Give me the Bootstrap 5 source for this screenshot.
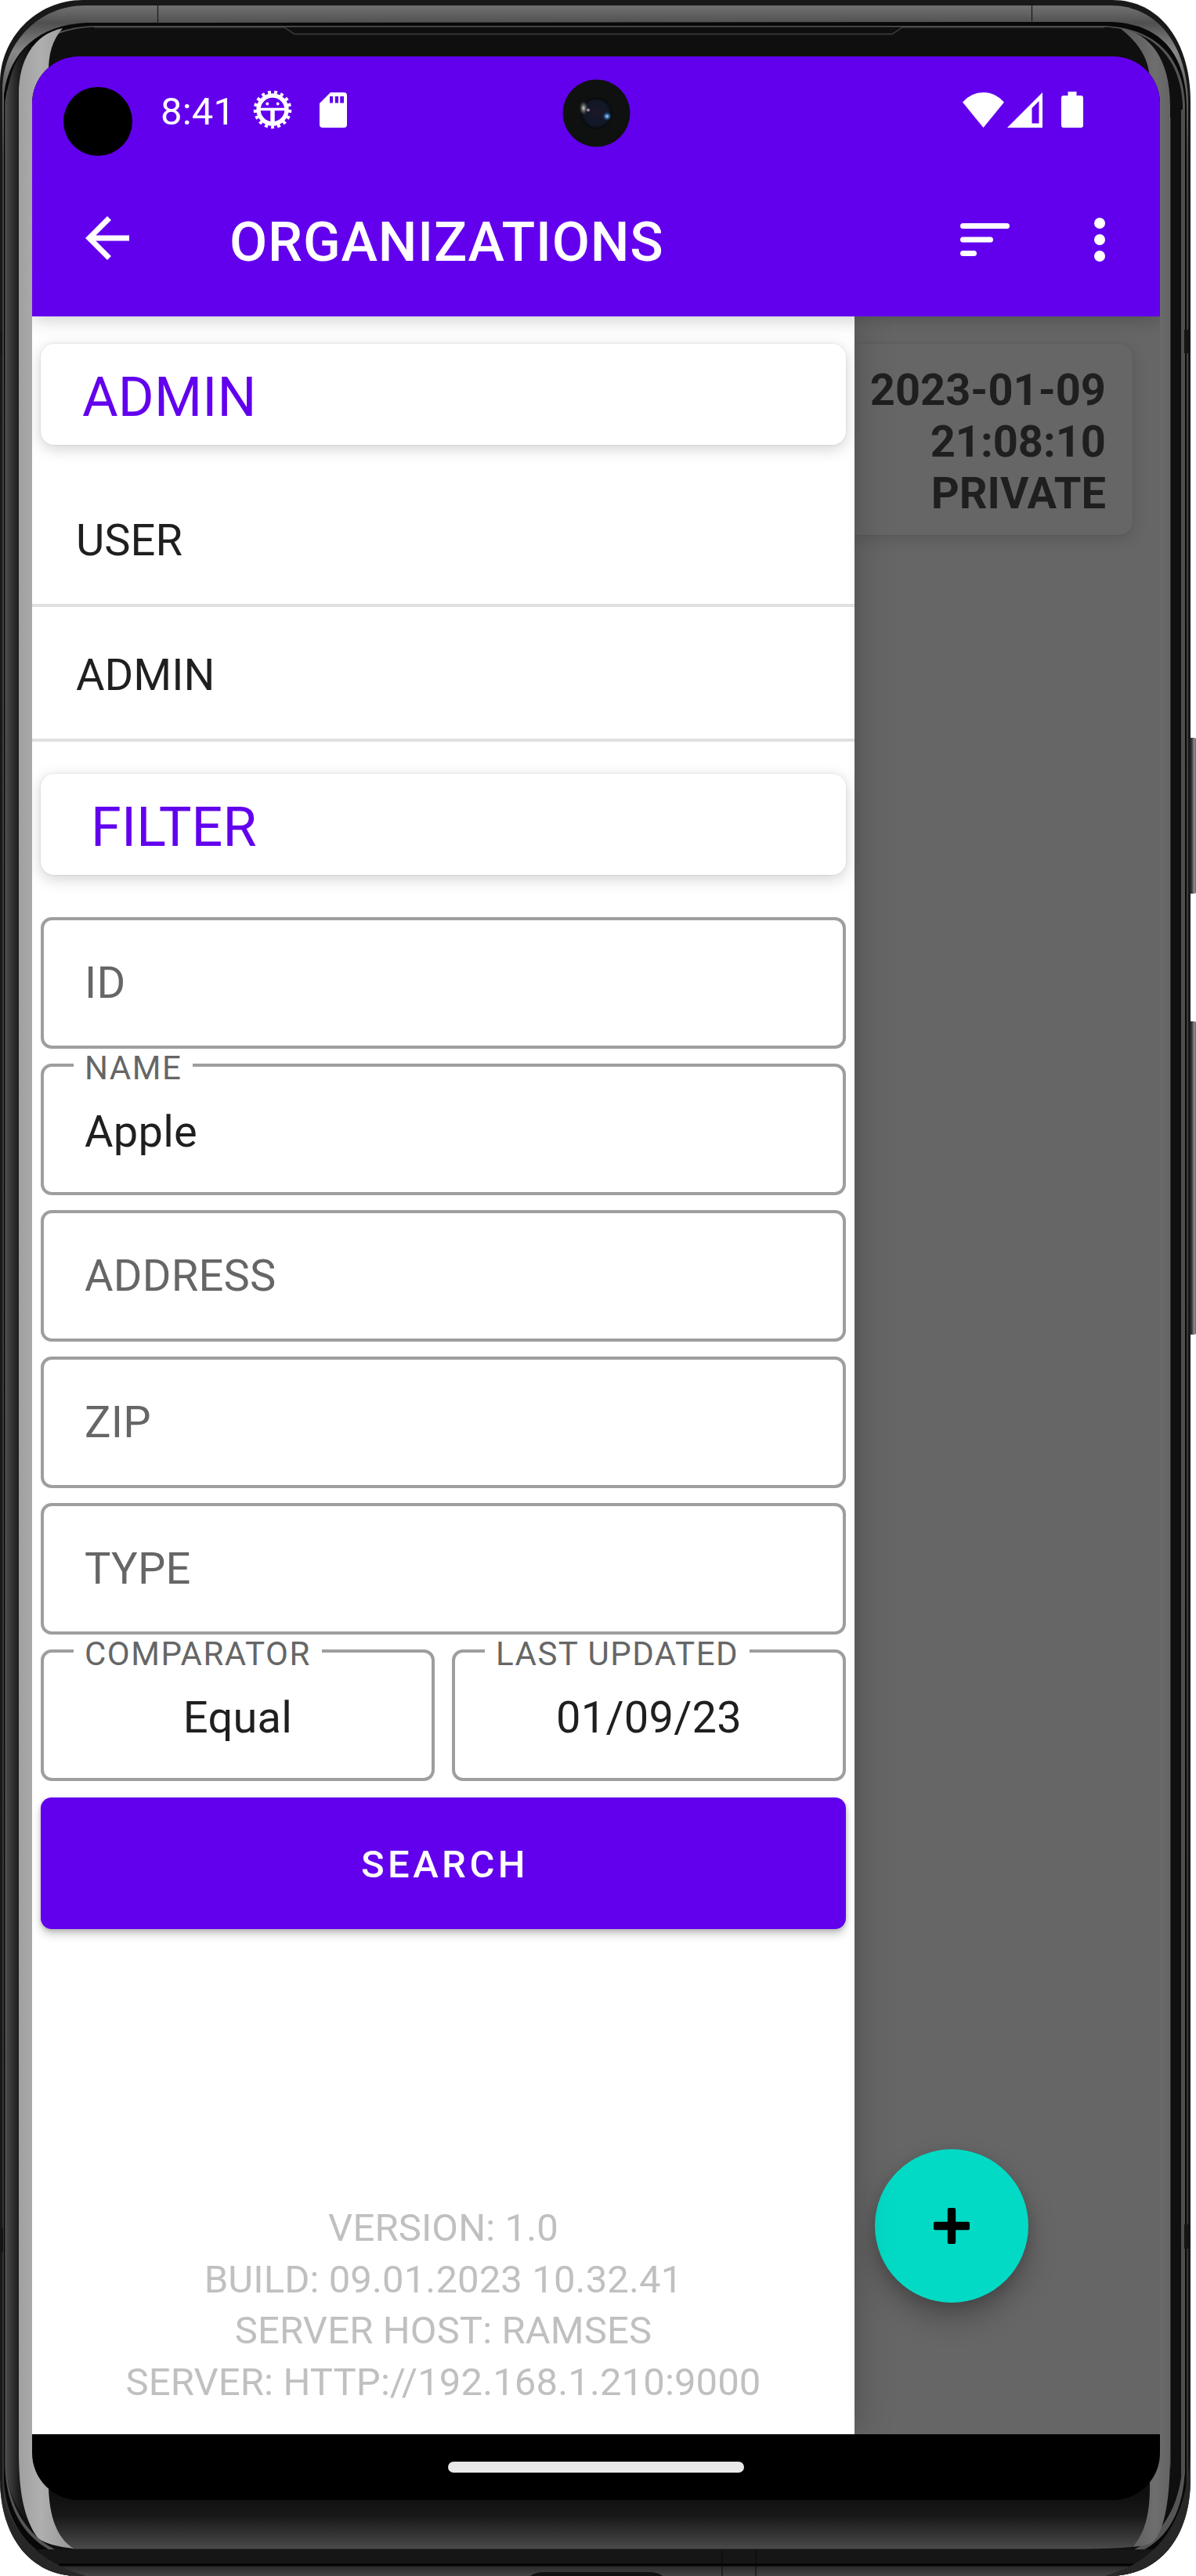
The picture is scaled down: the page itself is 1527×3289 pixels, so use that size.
<!DOCTYPE html>
<html lang="en">
<head>
<meta charset="utf-8">
<meta name="viewport" content="width=device-width, initial-scale=1">
<title>Organizations</title>
<link href="https://cdn.jsdelivr.net/npm/bootstrap@5.3.0/dist/css/bootstrap.min.css" rel="stylesheet">
<style>
  :root { --brand: #6200ee; --ink: #1f1f1f; --hint: #666; }
  body { width: 1527px; background: #fff; font-family: Roboto, "Liberation Sans", sans-serif; color: var(--ink); }
  .device { width: 1527px; height: 3289px; padding: 72px 46px 97px 41px; overflow: hidden; }
  .bezel { left: 0; top: 0; width: 1527px; height: 3289px; }
  .screen { width: 1440px; height: 3120px; border-radius: 60px; background: #000; overflow: hidden; }
  .appbar { background: var(--brand); color: #fff; height: 332px; z-index: 3; box-shadow: 0 4px 22px rgba(0,0,0,.2); }
  .statusbar { height: 136px; padding: 0 98px 0 164px; }
  .clock { font-size: 49px; line-height: 58px; padding-top: 5px; width: 96px; letter-spacing: .2px; }
  .bug-icon { margin-left: 22px; }
  .sd-icon { margin-left: 35px; }
  .toolbar { height: 196px; padding: 0 70px 0 54px; }
  .toolbar h1 { font-size: 70px; font-weight: 500; line-height: 82px; padding-top: 6px; margin-left: 114px; letter-spacing: .85px; }
  .more-icon { margin-left: 108px; }
  .punch { width: 88px; height: 88px; left: 40px; top: 39px; background: #000; }
  .lens { left: 677px; top: 29px; }
  .drawer { width: 1050px; background: #fff; z-index: 2; box-shadow: 0 0 46px rgba(0,0,0,.24); padding-top: 35px; }
  .section-card { height: 129px; margin: 0 11px; border-radius: 17px; background: #fff; color: var(--brand); font-size: 70px; line-height: 82px; letter-spacing: .2px; padding: 7px 53px 0; box-shadow: 0 5px 20px rgba(0,0,0,.18), 0 0 3px rgba(0,0,0,.1); }
  .section-card.filter-head { margin-top: 41px; padding-left: 64px; }
  .menu-list { margin-top: 35px; }
  .menu-item { height: 172px; font-size: 56px; line-height: 66px; padding: 6px 56px 0; border-bottom: 4px solid #e0e0e0; }
  .filters { padding: 54px 11px 0; gap: 19px; }
  .field-pair { gap: 22px; }
  .box-field { height: 168px; border: 4px solid #9e9e9e; border-radius: 14px; padding: 0 52px; font-size: 56px; line-height: 66px; letter-spacing: .25px; color: var(--hint); }
  .box-field.filled { color: var(--ink); padding-top: 6px; }
  .box-field label { left: 38px; top: -20px; padding: 0 14px; height: 44px; background: #fff; color: var(--hint); font-size: 42px; line-height: 44px; letter-spacing: 1.5px; white-space: nowrap; }
  .search-btn { height: 168px; margin-top: 2px; background: var(--brand); color: #fff; border: 0; border-radius: 14px; font-size: 49px; font-weight: 500; line-height: 58px; letter-spacing: 4.45px; padding: 4px 0 0 4px; box-shadow: 0 7px 12px rgba(0,0,0,.2), 0 2px 5px rgba(0,0,0,.16); }
  .about { font-size: 49px; line-height: 65.8px; letter-spacing: .12px; color: #c0c0c0; padding-bottom: 33px; }
  .backdrop-pane { background: #666; padding-top: 35px; }
  .org-card { height: 244px; width: 355px; border-radius: 0 17px 17px 0; background: #666; font-size: 56px; font-weight: 700; line-height: 66px; padding: 26px 34px 0 0; box-shadow: 0 5px 20px rgba(0,0,0,.14), 0 0 3px rgba(0,0,0,.08); }
  .fab { width: 196px; height: 196px; left: 26px; top: 2340px; background: #03dac5; box-shadow: 0 20px 36px rgba(0,0,0,.26), 0 4px 14px rgba(0,0,0,.12); }
  .navbar-strip { height: 84px; }
  .home-pill { width: 378px; height: 14px; border-radius: 7px; background: #ebebeb; }
</style>
</head>
<body>
<div class="device position-relative">
  <!-- phone body -->
  <svg class="bezel position-absolute" viewBox="0 0 1527 3289" aria-hidden="true">
    <defs>
      <linearGradient id="sideL" x1="0" y1="0" x2="1" y2="0"><stop offset="0" stop-color="#484848"/><stop offset=".5" stop-color="#1d1d1d"/><stop offset="1" stop-color="#0b0b0b"/></linearGradient>
      <linearGradient id="glassL" x1="0" y1="0" x2="1" y2="0"><stop offset="0" stop-color="#a0a0a0"/><stop offset=".4" stop-color="#afafaf"/><stop offset="1" stop-color="#969696"/></linearGradient>
      <linearGradient id="glassR" x1="0" y1="0" x2="1" y2="0"><stop offset="0" stop-color="#585858"/><stop offset=".7" stop-color="#6e6e6e"/><stop offset="1" stop-color="#646464"/></linearGradient>
      <linearGradient id="chin" x1="0" y1="0" x2="0" y2="1"><stop offset="0" stop-color="#0f0f0f"/><stop offset=".4" stop-color="#181818"/><stop offset="1" stop-color="#4a4a4a"/></linearGradient>
      <linearGradient id="base" x1="0" y1="0" x2="0" y2="1"><stop offset="0" stop-color="#2b2b2b"/><stop offset="1" stop-color="#444"/></linearGradient>
      <linearGradient id="key" x1="0" y1="0" x2="1" y2="0"><stop offset="0" stop-color="#1c1c1c"/><stop offset=".4" stop-color="#333"/><stop offset=".7" stop-color="#8c8c8c"/><stop offset="1" stop-color="#5a5a5a"/></linearGradient>
      <linearGradient id="rim" gradientUnits="userSpaceOnUse" x1="0" y1="0" x2="0" y2="3289"><stop offset="0" stop-color="#7c7c7c"/><stop offset=".009" stop-color="#505050"/><stop offset=".02" stop-color="#888"/><stop offset=".032" stop-color="#6a6a6a"/><stop offset=".06" stop-color="#444"/><stop offset="1" stop-color="#333"/></linearGradient>
      <clipPath id="bodyClip"><path d="M106 0H1420C1480 0 1520 52 1520 130V3165C1520 3240 1480 3289 1415 3289H100C40 3289 0 3240 0 3165V105C0 50 45 0 106 0Z"/></clipPath>
    </defs>
    <rect x="1517" y="942" width="11" height="199" rx="4" fill="url(#key)"/>
    <rect x="1517" y="1304" width="11" height="400" rx="4" fill="url(#key)"/>
    <g clip-path="url(#bodyClip)">
      <rect width="1520" height="3289" fill="#191919"/>
      <path d="M108 7H1418C1478 7 1517 58 1517 135V3160C1517 3235 1475 3277 1410 3277H103C48 3277 3 3235 3 3165V115C3 55 50 7 108 7Z" fill="url(#rim)"/>
      <path d="M110 29C50 32 12 65 5 120V3165C7 3230 50 3276 105 3276H1410C1475 3276 1514 3230 1515 3160V135C1514 72 1485 31 1420 28Z" fill="#080808"/>
      <path d="M120 33C55 35 15 68 6.500 130V3150C9 3222 50 3264 110 3269H1410C1470 3265 1511 3230 1513 3150V135C1511 75 1478 36 1410 33Z" fill="#555"/>
      <path d="M120 34.500C58 37 17 70 8 132V3145C10 3215 50 3258 110 3268H1410C1468 3258 1508 3215 1510 3140V135C1508 78 1475 37 1410 34.500Z" fill="#0f0f0f"/>
      <path d="M8 3150V135C10 95 22 68 40 55V3225C20 3205 10 3180 8 3150Z" fill="url(#sideL)"/>
      <rect x="1494" y="150" width="1" height="3000" fill="#333"/>
      <rect x="1508" y="140" width="5" height="3020" fill="#4e4e4e"/>
      <rect x="0" y="3255" width="1527" height="34" fill="#161616"/>
      <rect x="75" y="3273" width="1400" height="3" fill="#050505"/>
      <rect y="3277" width="1527" height="12" fill="url(#base)"/>
      <path d="M0 3130V3170C10 3230 45 3270 110 3289H0Z M1520 3130C1515 3220 1480 3270 1410 3289H1527V3130Z" fill="#272727"/>
      <path d="M62 3185H1471C1471 3215 1464 3240 1445 3252C1420 3254 1400 3254.500 1370 3254.500H93C72 3238 62 3212 62 3185Z" fill="url(#chin)"/>
      <path d="M24 3130V120C24 78 42 44 80 36C66 52 62 70 62 92V3176C63 3212 72 3240 94 3254C75 3252 55 3247 48 3240C30 3215 24 3180 24 3130Z" fill="url(#glassL)"/>
      <path d="M1430 36C1468 42 1494 75 1494 135V3130C1494 3200 1485 3235 1470 3247C1462 3250 1455 3251 1446 3252C1462 3235 1468 3208 1468 3176V100C1466 70 1450 52 1430 36Z" fill="url(#glassR)"/>
      <path d="M120 35H363L376 43.500H1139L1152 35H1410" fill="none" stroke="#404040" stroke-width="1.300"/>
      <path d="M201.500 7V30M1317.500 5V27" stroke="#1a1a1a" stroke-width="1.200"/>
      <path d="M922 3256V3289M965 3256V3289" stroke="#090909" stroke-width="1"/>
      <path d="M677 3289Q684 3284 695 3284H828Q840 3284 846 3289Z" fill="#111"/>
      <path d="M0 422H3V452H0ZM1512 421H1520V451H1512ZM0 2844H4V2876H0ZM1512 2840H1520V2871H1512Z" fill="#151515"/>
    </g>
  </svg>

  <div class="screen position-relative d-flex flex-column">
    <header class="appbar position-relative flex-shrink-0">
      <span class="punch position-absolute rounded-circle"></span>
      <svg class="lens position-absolute" width="87" height="87" viewBox="0 0 87 87" aria-hidden="true">
        <defs>
          <radialGradient id="glass"><stop offset="0" stop-color="#1b1727"/><stop offset=".75" stop-color="#111826"/><stop offset="1" stop-color="#070909"/></radialGradient>
          <radialGradient id="glintA"><stop offset="0" stop-color="#d3dacf"/><stop offset="1" stop-color="#59605f" stop-opacity="0"/></radialGradient>
          <radialGradient id="glintB"><stop offset="0" stop-color="#b5dcff"/><stop offset=".4" stop-color="#3a74b3"/><stop offset="1" stop-color="#12304f" stop-opacity="0"/></radialGradient>
        </defs>
        <circle cx="43.500" cy="43.500" r="43" fill="#0f1111"/>
        <circle cx="43.500" cy="43.500" r="20.500" fill="url(#glass)"/>
        <ellipse cx="27" cy="37" rx="5.500" ry="9" fill="url(#glintA)"/>
        <circle cx="33" cy="39.500" r="2" fill="#a38395"/>
        <circle cx="57" cy="47.500" r="6" fill="url(#glintB)"/>
      </svg>

      <div class="statusbar d-flex align-items-center">
        <span class="clock">8:41</span>
        <!-- debug bug: toothed ring, 17 teeth -->
        <svg class="bug-icon" width="50" height="50" viewBox="-25 -25 50 50" aria-hidden="true">
          <circle r="18" fill="none" stroke="#fff" stroke-width="5.400"/>
          <circle r="21.500" fill="none" stroke="#fff" stroke-width="5.600" pathLength="170" stroke-dasharray="4.800 5.200" stroke-dashoffset="2.400" transform="rotate(90)"/>
          <path d="M-17-.500H17M0 0V18" stroke="#fff" stroke-width="3.400" fill="none"/>
          <path d="M0 0V18" stroke="#fff" stroke-width="5.500" fill="none"/>
          <circle cx="-6.700" cy="-7.500" r="1.900" fill="#fff"/><circle cx="6.700" cy="-7.500" r="1.900" fill="#fff"/>
        </svg>
        <svg class="sd-icon" width="35" height="45" viewBox="0 0 35 45" aria-hidden="true">
          <path d="M14 0H31Q35 0 35 4V41Q35 45 31 45H4Q0 45 0 41V14Z" fill="#fff"/>
          <path d="M13 5H17V13.500H13ZM19.800 5H24V13.500H19.800ZM26.200 5H31V13.500H26.200Z" fill="#6200ee"/>
        </svg>
        <div class="d-flex align-items-center ms-auto">
          <svg width="53" height="45" viewBox="0 0 53 45" aria-hidden="true"><path d="M26.500 45L0 12.500Q11 0 26.500 0T53 12.500Z" fill="#fff"/></svg>
          <svg class="ms-1" width="45" height="45" viewBox="0 0 45 45" aria-hidden="true"><path fill-rule="evenodd" d="M45 0V45H0ZM40.500 11L31.500 20V39.500H40.500Z" fill="#fff"/></svg>
          <svg class="ms-4" width="28" height="46" viewBox="0 0 28 46" aria-hidden="true"><path d="M8.500 0H19.500V5H25Q28 5 28 8V43Q28 46 25 46H3Q0 46 0 43V8Q0 5 3 5H8.500Z" fill="#fff"/></svg>
        </div>
      </div>

      <div class="toolbar d-flex align-items-center">
        <svg class="mb-1" width="84" height="84" viewBox="0 0 24 24" fill="#fff" aria-hidden="true"><path d="M20 11H7.830l5.590-5.590L12 4l-8 8 8 8 1.410-1.410L7.830 13H20v-2z"/></svg>
        <h1 class="mb-0">ORGANIZATIONS</h1>
        <svg class="ms-auto" width="63" height="42" viewBox="0 0 63 42" stroke="#fff" stroke-width="7" stroke-linecap="round" aria-hidden="true"><path d="M3.500 3.500H59.500M3.500 21H38.500M3.500 38.500H17.500"/></svg>
        <svg class="more-icon" width="14" height="56" viewBox="0 0 14 56" fill="#fff" aria-hidden="true"><circle cx="7" cy="7" r="7"/><circle cx="7" cy="28" r="7"/><circle cx="7" cy="49" r="7"/></svg>
      </div>
    </header>

    <main class="d-flex flex-grow-1">
      <aside class="drawer d-flex flex-column flex-shrink-0 position-relative">
        <div class="section-card d-flex align-items-center"><span>ADMIN</span></div>
        <nav class="menu-list d-flex flex-column">
          <div class="menu-item d-flex align-items-center">USER</div>
          <div class="menu-item d-flex align-items-center">ADMIN</div>
        </nav>
        <div class="section-card filter-head d-flex align-items-center"><span>FILTER</span></div>
        <div class="filters d-flex flex-column">
          <div class="box-field d-flex align-items-center"><span>ID</span></div>
          <div class="box-field filled position-relative d-flex align-items-center"><label class="position-absolute">NAME</label><span>Apple</span></div>
          <div class="box-field d-flex align-items-center"><span>ADDRESS</span></div>
          <div class="box-field d-flex align-items-center"><span>ZIP</span></div>
          <div class="box-field d-flex align-items-center"><span>TYPE</span></div>
          <div class="field-pair d-flex">
            <div class="box-field filled position-relative d-flex align-items-center justify-content-center w-50"><label class="position-absolute">COMPARATOR</label><span>Equal</span></div>
            <div class="box-field filled position-relative d-flex align-items-center justify-content-center w-50"><label class="position-absolute">LAST UPDATED</label><span>01/09/23</span></div>
          </div>
          <button type="button" class="search-btn btn w-100">SEARCH</button>
        </div>
        <footer class="about mt-auto text-center">
          <div>VERSION: 1.0</div>
          <div>BUILD: 09.01.2023 10.32.41</div>
          <div>SERVER HOST: RAMSES</div>
          <div>SERVER: HTTP://192.168.1.210:9000</div>
        </footer>
      </aside>

      <section class="backdrop-pane position-relative flex-grow-1">
        <div class="org-card text-end">
          <div>2023-01-09</div>
          <div>21:08:10</div>
          <div>PRIVATE</div>
        </div>
        <div class="fab position-absolute rounded-circle d-flex align-items-center justify-content-center">
          <svg width="46" height="46" viewBox="0 0 46 46" aria-hidden="true"><rect x="17.800" y="0" width="10.400" height="46" rx="2"/><rect x="0" y="17.800" width="46" height="10.400" rx="2"/></svg>
        </div>
      </section>
    </main>

    <div class="navbar-strip d-flex align-items-center justify-content-center flex-shrink-0"><span class="home-pill"></span></div>
  </div>
</div>
<script src="https://cdn.jsdelivr.net/npm/bootstrap@5.3.0/dist/js/bootstrap.bundle.min.js"></script>
</body>
</html>
